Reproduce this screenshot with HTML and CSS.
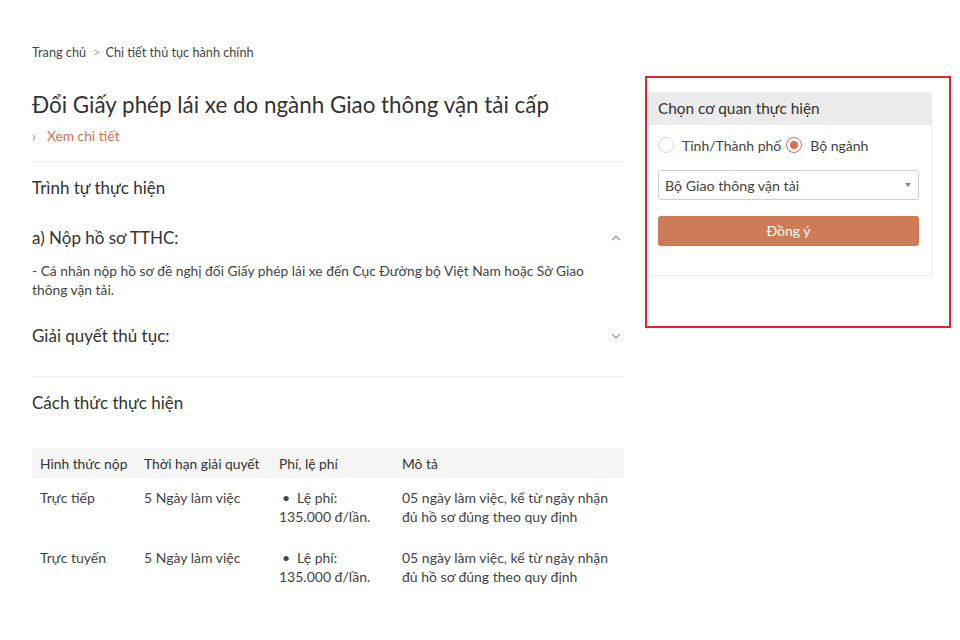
FILE: index.html
```html
<!DOCTYPE html>
<html lang="vi">
<head>
<meta charset="utf-8">
<title>Chi tiết thủ tục hành chính</title>
<link rel="stylesheet" href="styles.css">
</head>
<body>
<div class="page">
  <main class="main">
    <nav class="crumbs"><span class="crumb">Trang chủ</span><span class="sep">&gt;</span><span class="crumb">Chi tiết thủ tục hành chính</span></nav>
    <h1 class="title">Đổi Giấy phép lái xe do ngành Giao thông vận tải cấp</h1>
    <div class="more"><span class="more-arrow">›</span>Xem chi tiết</div>
    <hr class="divider">
    <h2 class="section">Trình tự thực hiện</h2>
    <div class="acc-head first">
      <span>a) Nộp hồ sơ TTHC:</span>
      <svg class="chev" width="12" height="8" viewBox="0 0 12 8"><path d="M2 6 L6 2 L10 6" fill="none" stroke="#9a9a9a" stroke-width="1.2"/></svg>
    </div>
    <p class="acc-body">- Cá nhân nộp hồ sơ đề nghị đổi Giấy phép lái xe đến Cục Đường bộ Việt Nam hoặc Sở Giao thông vận tải.</p>
    <div class="acc-head second">
      <span>Giải quyết thủ tục:</span>
      <svg class="chev" width="12" height="8" viewBox="0 0 12 8"><path d="M2 2 L6 6 L10 2" fill="none" stroke="#9a9a9a" stroke-width="1.2"/></svg>
    </div>
    <hr class="divider divider2">
    <h2 class="section">Cách thức thực hiện</h2>
    <table class="tbl">
      <thead>
        <tr><th class="c1">Hình thức nộp</th><th class="c2">Thời hạn giải quyết</th><th class="c3">Phí, lệ phí</th><th class="c4">Mô tả</th></tr>
      </thead>
      <tbody>
        <tr>
          <td>Trực tiếp</td>
          <td>5 Ngày làm việc</td>
          <td><ul class="fee"><li>Lệ phí: 135.000 đ/lần.</li></ul></td>
          <td>05 ngày làm việc, kể từ ngày nhận đủ hồ sơ đúng theo quy định</td>
        </tr>
        <tr>
          <td>Trực tuyến</td>
          <td>5 Ngày làm việc</td>
          <td><ul class="fee"><li>Lệ phí: 135.000 đ/lần.</li></ul></td>
          <td>05 ngày làm việc, kể từ ngày nhận đủ hồ sơ đúng theo quy định</td>
        </tr>
      </tbody>
    </table>
  </main>
  <aside class="side">
    <div class="card">
      <div class="card-head">Chọn cơ quan thực hiện</div>
      <div class="card-body">
        <div class="radios">
          <span class="radio"></span><span class="rlabel">Tỉnh/Thành phố</span>
          <span class="radio on"></span><span class="rlabel">Bộ ngành</span>
        </div>
        <div class="select"><span>Bộ Giao thông vận tải</span><span class="caret"></span></div>
        <div class="btn">Đồng ý</div>
      </div>
    </div>
  </aside>
</div>
</body>
</html>
```
FILE: styles.css
```css
* { box-sizing: border-box; }
html, body { margin: 0; padding: 0; background: #fff; }
body {
  font-family: Lato, "Open Sans", "Liberation Sans", sans-serif;
  color: #333;
  width: 960px;
  height: 640px;
  overflow: hidden;
}
.page {
  display: flex;
  align-items: flex-start;
  padding-left: 32px;
  gap: 21px;
}
.main { width: 592px; padding-top: 44px; }
.crumbs { font-size: 12.7px; line-height: 16px; color: #444; height: 16px; }
.sep { color: #aaa; margin: 0 5px 0 7px; }
.title {
  margin: 31px 0 0;
  font-size: 22.4px;
  line-height: 28px;
  font-weight: 400;
  color: #333;
}
.more {
  margin-top: 8px;
  font-size: 13.8px;
  line-height: 18px;
  color: #d5714f;
}
.more-arrow { display: inline-block; width: 15px; color: #d5714f; }
.divider { margin: 16px 0 0; border: 0; border-top: 1px solid #ededed; height: 0; }
.divider2 { margin-top: 29px; }
.section {
  margin: 15px 0 0;
  font-size: 17px;
  line-height: 22px;
  font-weight: 400;
  color: #333;
}
.acc-head {
  display: flex;
  justify-content: space-between;
  align-items: center;
  font-size: 17px;
  line-height: 22px;
  color: #333;
}
.acc-head.first { margin-top: 28px; }
.acc-head.second { margin-top: 26px; }
.chev { margin-right: 2px; }
.acc-body {
  margin: 12px 0 0;
  font-size: 13.8px;
  line-height: 19px;
  color: #444;
  width: 580px;
}
.tbl {
  margin-top: 34px;
  width: 592px;
  border-collapse: collapse;
  table-layout: fixed;
  font-size: 14px;
  color: #444;
}
.tbl th {
  background: #f5f5f5;
  font-weight: 400;
  text-align: left;
  height: 30px;
  padding: 0 0 0 8px;
  line-height: 19px;
  color: #333;
  white-space: nowrap;
  font-size: 13.8px;
}
.tbl .c1 { width: 104px; }
.tbl .c2 { width: 135px; }
.tbl .c3 { width: 123px; }
.tbl .c4 { width: 230px; }
.tbl td {
  vertical-align: top;
  padding: 10px 8px 12px;
  line-height: 19px;
}
.tbl td:nth-child(3) { padding-right: 12px; }
.fee { margin: 0; padding: 0; list-style: none; }
.fee li::before {
  content: "•";
  display: inline-block;
  width: 15px;
  padding-left: 3px;
}
.side {
  margin-top: 76px;
  width: 306px;
  height: 252px;
  border: 2px solid #e3262d;
  padding-top: 14px;
}
.card {
  width: 285px;
  border: 1px solid #eeeeee;
  border-left: 0;
  background: #fff;
}
.card-head {
  background: #ebebeb;
  height: 32px;
  line-height: 31px;
  padding-left: 11px;
  font-size: 15.4px;
  color: #333;
}
.card-body { padding: 10px 11px 29px 11px; }
.radios {
  display: flex;
  align-items: center;
  height: 20px;
  font-size: 14px;
  color: #444;
}
.radio {
  width: 16px;
  height: 16px;
  border-radius: 50%;
  border: 1px solid #d8d8d8;
  margin-right: 8px;
  position: relative;
}
.radio.on { border-color: #d5714f; margin-left: 5px; }
.radio.on::after {
  content: "";
  position: absolute;
  left: 3px; top: 3px;
  width: 8px; height: 8px;
  border-radius: 50%;
  background: #d5714f;
}
.select {
  margin-top: 15px;
  height: 30px;
  border: 1px solid #cfcfcf;
  border-radius: 3px;
  display: flex;
  align-items: center;
  justify-content: space-between;
  padding: 0 7px 0 6px;
  font-size: 14.2px;
  color: #444;
  width: 261px;
}
.caret {
  width: 0; height: 0;
  border-left: 3px solid transparent;
  border-right: 3px solid transparent;
  border-top: 4px solid #888;
}
.btn {
  margin-top: 16px;
  height: 30px;
  width: 261px;
  border-radius: 3px;
  background: #cf7b58;
  color: #fff;
  font-size: 14px;
  line-height: 30px;
  text-align: center;
}
```
